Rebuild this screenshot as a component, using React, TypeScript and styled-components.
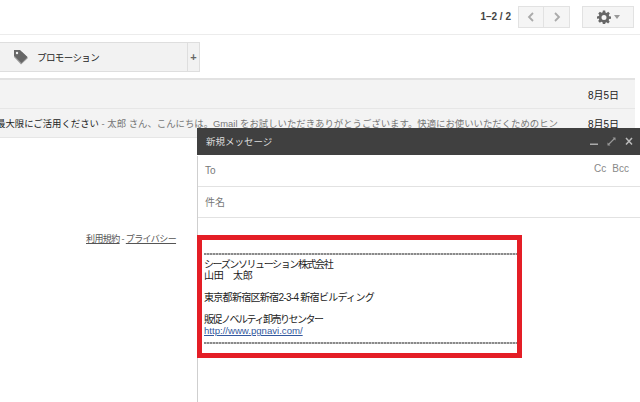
import styled, { createGlobalStyle } from "styled-components";

const GlobalStyle = createGlobalStyle`
    html, body {
        margin: 0;
        padding: 0;
        background: #fff;
    }
    body {
        font-family: "Liberation Sans", "Noto Sans CJK JP", sans-serif;
        font-size: 10px;
        color: #222;
    }
`

const Page = styled.div`
    position: relative;
    width: 640px;
    height: 402px;
    overflow: hidden;
    background: #fff;
`

const TopBar = styled.div`
    display: flex;
    align-items: center;
    justify-content: flex-end;
    height: 35px;
    padding: 0 6px 1px 0;
    box-sizing: border-box;
    border-bottom: 1px solid #ececec;
`

const PageCount = styled.span`
    font-size: 10px;
    font-weight: bold;
    color: #444;
    margin-right: 7px;
`

const PagerButton = styled.div<{ $side: "left" | "right" }>`
    display: flex;
    align-items: center;
    justify-content: center;
    width: 26px;
    height: 22px;
    box-sizing: border-box;
    background: #f5f5f5;
    border: 1px solid #e2e2e2;
    border-left-width: ${(p) => (p.$side === "right" ? 0 : 1)}px;
`

const SettingsButton = styled.div`
    display: flex;
    align-items: center;
    justify-content: center;
    gap: 3px;
    width: 52px;
    height: 22px;
    box-sizing: border-box;
    margin-left: 12px;
    background: #f5f5f5;
    border: 1px solid #e2e2e2;
`

const TabRow = styled.div`
    display: flex;
    width: 200px;
    height: 30px;
    margin-top: 7px;
    box-sizing: border-box;
    background: #f2f2f2;
    border: 1px solid #dedede;
    border-left: none;
`

const Tab = styled.div`
    display: flex;
    align-items: center;
    flex: 1;
    padding-left: 13px;
    gap: 8px;
    font-size: 9.5px;
    letter-spacing: -0.6px;
    color: #222;
    border-right: 1px solid #dedede;
`

const AddTab = styled.div`
    display: flex;
    align-items: center;
    justify-content: center;
    width: 11px;
    font-size: 11px;
    font-weight: bold;
    color: #666;
`

const MailList = styled.div`
    width: 635px;
    margin-top: 6px;
    border-top: 2px solid #e2e2e2;
`

const MailRow = styled.div`
    display: flex;
    align-items: center;
    justify-content: space-between;
    height: 29px;
    box-sizing: border-box;
    padding: 0 16px 0 0;
    background: #f3f3f3;
    border-bottom: 1px solid #e6e6e6;
    white-space: nowrap;
    overflow: hidden;
`

const MailText = styled.div`
    flex: none;
    margin-left: -4px;
    font-size: 9.4px;
    color: #222;
    span { color: #777; }
`

const MailDate = styled.div`
    margin-left: auto;
    font-size: 10px;
    color: #222;
`

const FooterLinks = styled.div`
    margin: 94px 0 0 86px;
    font-size: 9px;
    letter-spacing: -0.6px;
    color: #666;
    a {
        color: #555;
        text-decoration: underline;
    }
`

const Compose = styled.div`
    position: absolute;
    left: 197px;
    top: 128px;
    width: 443px;
    height: 274px;
    box-sizing: border-box;
    display: flex;
    flex-direction: column;
    background: #fff;
    border-left: 1px solid #cfcfcf;
`

const ComposeHeader = styled.div`
    display: flex;
    align-items: center;
    justify-content: space-between;
    height: 28px;
    box-sizing: border-box;
    padding: 0 7px 1px 9px;
    margin-left: -1px;
    background: #404040;
    border-bottom: 1px solid #fff;
    color: #ddd;
    font-size: 9.5px;
`

const HeaderIcons = styled.div`
    display: flex;
    align-items: center;
    gap: 9px;
`

const FieldRow = styled.div`
    display: flex;
    align-items: center;
    justify-content: space-between;
    height: 31px;
    padding: 0 11px 2px 7px;
    box-sizing: border-box;
    border-bottom: 1px solid #e2e2e2;
    color: #777;
    font-size: 10px;
`

const CcBcc = styled.div`
    display: flex;
    gap: 6px;
    font-size: 10px;
    color: #888;
    margin-top: -3px;
`

const ComposeBody = styled.div`
    flex: 1;
    padding-top: 17px;
`

const SignatureBox = styled.div`
    width: 325px;
    height: 123px;
    box-sizing: border-box;
    margin-left: -1px;
    padding: 13px 0 0 2px;
    border: 5px solid #e41e26;
    font-size: 10px;
    line-height: 11px;
    color: #222;
`

const Rule = styled.div<{ $gap: number }>`
    height: 2px;
    margin-bottom: ${(p) => p.$gap}px;
    background: repeating-linear-gradient(90deg, #8a8a8a 0 2px, #c4c4c4 2px 3px);
`

const SignatureLine = styled.div<{ $track?: number }>`
    height: 11px;
    white-space: nowrap;
    letter-spacing: ${(p) => p.$track ?? 0}px;
`

const SignatureGap = styled.div`
    height: 11px;
`

const SignatureLink = styled.a`
    display: block;
    height: 11px;
    font-size: 9.6px;
    color: #33589e;
    text-decoration: underline;
    margin-bottom: 6px;
`

const Chevron = ({ dir }: { dir: "left" | "right" }) => (
    <svg width="8" height="12" viewBox="0 0 8 12">
        <path
            d={dir === "left" ? "M6 2 L2 6 L6 10" : "M2 2 L6 6 L2 10"}
            fill="none"
            stroke="#aaa"
            strokeWidth="1.8"
        />
    </svg>
)

const Gear = () => (
    <svg width="14" height="14" viewBox="0 0 24 24">
        <path
            fill="#666"
            fillRule="evenodd"
            d="M10 1h4l.6 3.2 1.9.8 2.7-1.8 2.8 2.8-1.8 2.7.8 1.9L24 11v4l-3.2.6-.8 1.9 1.8 2.7-2.8 2.8-2.7-1.8-1.9.8L14 24h-4l-.6-3.2-1.9-.8-2.7 1.8-2.8-2.8 1.8-2.7-.8-1.9L0 15v-4l3.2-.6.8-1.9-1.8-2.7 2.8-2.8 2.7 1.8 1.9-.8zM12 8.5a4.3 4.3 0 1 0 0 8.6 4.3 4.3 0 0 0 0-8.6z"
        />
    </svg>
)

const Caret = () => (
    <svg width="6" height="4" viewBox="0 0 6 4">
        <path d="M0 0h6L3 4z" fill="#999" />
    </svg>
)

const TagIcon = () => (
    <svg width="16" height="17" viewBox="0 0 16 17">
        <path d="M1 5v3l7 7.5L15 9 9 3z" fill="#999" />
        <path d="M1 1h6l7.5 7-6 6L1 6.5z" fill="#666" />
        <circle cx="4" cy="4" r="1.2" fill="#f2f2f2" />
    </svg>
)

const HeaderIconSet = () => (
    <HeaderIcons>
        <svg width="8" height="9" viewBox="0 0 8 9">
            <rect x="0" y="6.5" width="8" height="1.5" fill="#aaa" />
        </svg>
        <svg width="9" height="9" viewBox="0 0 9 9">
            <path d="M5.5 0.5h3v3L7.4 2.4 2.4 7.4l1.1 1.1h-3v-3l1.1 1.1 5-5z" fill="#999" />
        </svg>
        <svg width="8" height="9" viewBox="0 0 8 9">
            <path d="M1 1l6 6.5M7 1L1 7.5" stroke="#bbb" strokeWidth="1.5" />
        </svg>
    </HeaderIcons>
)

export default function App() {
    return (
        <Page>
            <GlobalStyle />
            <TopBar>
                <PageCount>1–2 / 2</PageCount>
                <PagerButton $side="left"><Chevron dir="left" /></PagerButton>
                <PagerButton $side="right"><Chevron dir="right" /></PagerButton>
                <SettingsButton><Gear /><Caret /></SettingsButton>
            </TopBar>
            <TabRow>
                <Tab><TagIcon />プロモーション</Tab>
                <AddTab>+</AddTab>
            </TabRow>
            <MailList>
                <MailRow>
                    <MailDate>8月5日</MailDate>
                </MailRow>
                <MailRow>
                    <MailText>
                        最大限にご活用ください<span> - 太郎 さん、こんにちは。Gmail をお試しいただきありがとうございます。快適にお使いいただくためのヒン</span>
                    </MailText>
                    <MailDate>8月5日</MailDate>
                </MailRow>
            </MailList>
            <FooterLinks>
                <a>利用規約</a> - <a>プライバシー</a>
            </FooterLinks>
            <Compose>
                <ComposeHeader>
                    新規メッセージ
                    <HeaderIconSet />
                </ComposeHeader>
                <FieldRow>
                    To
                    <CcBcc><span>Cc</span><span>Bcc</span></CcBcc>
                </FieldRow>
                <FieldRow>件名</FieldRow>
                <ComposeBody>
                    <SignatureBox>
                        <Rule $gap={4} />
                        <SignatureLine $track={-1.4}>シーズンソリューション株式会社</SignatureLine>
                        <SignatureLine $track={-0.3}>山田　太郎</SignatureLine>
                        <SignatureGap />
                        <SignatureLine $track={-0.7}>東京都新宿区新宿2-3-4 新宿ビルディング</SignatureLine>
                        <SignatureGap />
                        <SignatureLine $track={-1.5}>販促ノベルティ卸売りセンター</SignatureLine>
                        <SignatureLink href="#">http://www.pgnavi.com/</SignatureLink>
                        <Rule $gap={0} />
                    </SignatureBox>
                </ComposeBody>
            </Compose>
        </Page>
    )
}
